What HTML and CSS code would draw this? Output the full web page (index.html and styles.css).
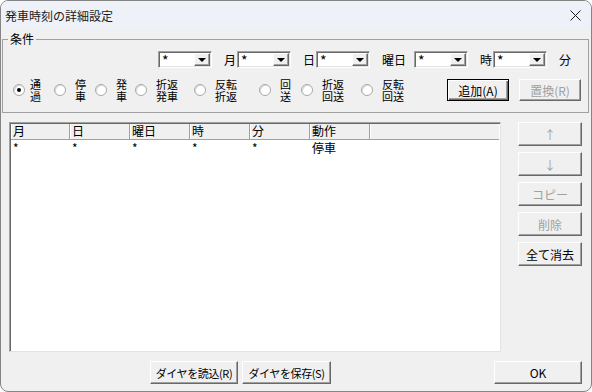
FILE: index.html
```html
<!DOCTYPE html>
<html lang="ja">
<head>
    <meta charset="UTF-8">
    <title>発車時刻の詳細設定</title>
    <link rel="stylesheet" href="styles.css">
</head>
<body>

<div class="window">
    <div class="titlebar">
        <span class="title">発車時刻の詳細設定</span>
        <svg class="close" width="11" height="11" viewBox="0 0 11 11">
            <path d="M0.5 0.5L10.5 10.5M10.5 0.5L0.5 10.5" stroke="#1a1a1a" stroke-width="1"/>
        </svg>
    </div>

    <div class="dialog">
        <!-- Conditions group -->
        <fieldset class="group">
            <legend>条件</legend>
            <div class="cond-row">
                <div class="combo"><span class="combo-text">*</span><span class="drop"></span></div>
                <span class="lbl">月</span>
                <div class="combo"><span class="combo-text">*</span><span class="drop"></span></div>
                <span class="lbl">日</span>
                <div class="combo"><span class="combo-text">*</span><span class="drop"></span></div>
                <span class="lbl wide">曜日</span>
                <div class="combo"><span class="combo-text">*</span><span class="drop"></span></div>
                <span class="lbl">時</span>
                <div class="combo"><span class="combo-text">*</span><span class="drop"></span></div>
                <span class="lbl">分</span>
            </div>
            <div class="action-row">
                <label class="opt first"><span class="radio checked"></span><span class="opt-text">通<br>過</span></label>
                <label class="opt"><span class="radio"></span><span class="opt-text">停<br>車</span></label>
                <label class="opt"><span class="radio"></span><span class="opt-text">発<br>車</span></label>
                <label class="opt"><span class="radio"></span><span class="opt-text">折返<br>発車</span></label>
                <label class="opt"><span class="radio"></span><span class="opt-text">反転<br>折返</span></label>
                <label class="opt"><span class="radio"></span><span class="opt-text">回<br>送</span></label>
                <label class="opt"><span class="radio"></span><span class="opt-text">折返<br>回送</span></label>
                <label class="opt"><span class="radio"></span><span class="opt-text">反転<br>回送</span></label>
                <div class="actions">
                    <button class="btn default">追加(A)</button>
                    <button class="btn" disabled>置換(R)</button>
                </div>
            </div>
        </fieldset>

        <!-- List + side buttons -->
        <div class="main">
            <div class="listview">
                <div class="lv-head">
                    <div class="col">月</div>
                    <div class="col">日</div>
                    <div class="col">曜日</div>
                    <div class="col">時</div>
                    <div class="col">分</div>
                    <div class="col">動作</div>
                    <div class="col rest"></div>
                </div>
                <div class="lv-row">
                    <div class="cell">*</div>
                    <div class="cell">*</div>
                    <div class="cell">*</div>
                    <div class="cell">*</div>
                    <div class="cell">*</div>
                    <div class="cell">停車</div>
                </div>
            </div>
            <div class="side">
                <button class="btn" disabled>↑</button>
                <button class="btn" disabled>↓</button>
                <button class="btn" disabled>コピー</button>
                <button class="btn" disabled>削除</button>
                <button class="btn">全て消去</button>
            </div>
        </div>

        <div class="footer">
            <button class="btn load">ダイヤを読込(R)</button>
            <button class="btn save">ダイヤを保存(S)</button>
            <button class="btn ok">OK</button>
        </div>
    </div>
</div>

</body>
</html>
```

FILE: styles.css
```css
/* Basic page */
body {
    margin: 0;
    font-family: "Noto Sans CJK JP", "Liberation Sans", sans-serif;
    font-size: 12px;
    color: #000;
    background: #fff;
}

.window {
    width: 592px;
    height: 392px;
    box-sizing: border-box;
    border: 1px solid #858585;
    border-radius: 8px;
    overflow: hidden;
    background: #f0f0f0;
    display: flex;
    flex-direction: column;
}

/* Title bar */
.titlebar {
    height: 29px;
    flex: none;
    display: flex;
    align-items: center;
    justify-content: space-between;
    padding: 0 10px 0 4px;
    background: #eef2f8;
}

.title {
    font-size: 12px;
    color: #1a1a1a;
}

.dialog {
    flex: 1;
    display: flex;
    flex-direction: column;
}

/* Group box */
.group {
    margin: 1px 2px 0 1px;
    padding: 4px 0 9px 0;
    min-width: 0;
    border: 1px solid #a0a0a0;
}

.group legend {
    margin-left: 5px;
    padding: 0 2px;
    line-height: 16px;
}

.cond-row {
    display: flex;
    align-items: center;
    padding-left: 155px;
    height: 17px;
}

.lbl {
    margin: 0 1px 0 12px;
}

.lbl.wide {
    margin-right: 8px;
}

.combo {
    width: 54px;
    height: 17px;
    box-sizing: border-box;
    display: flex;
    padding: 1px;
    background: #fff;
    border: 1px solid;
    border-color: #a0a0a0 #fff #fff #a0a0a0;
    box-shadow: inset 1px 1px #696969, inset -1px -1px #e3e3e3;
}

.combo-text {
    flex: 1;
    padding-left: 2px;
    font-size: 14px;
    line-height: 15px;
}

.drop {
    width: 16px;
    box-sizing: border-box;
    background: #f0f0f0;
    border: 1px solid;
    border-color: #fff #696969 #696969 #fff;
    box-shadow: inset -1px -1px #a0a0a0;
    display: flex;
    align-items: center;
    justify-content: center;
}

.drop::after {
    content: "";
    border-left: 4px solid transparent;
    border-right: 4px solid transparent;
    border-top: 4px solid #000;
}

/* Radio options */
.action-row {
    margin-top: 9px;
    height: 26px;
    display: grid;
    grid-template-columns: 41px 41px 40px 59px 65px 42px 60px 86px auto;
    align-items: center;
    padding-left: 10px;
}

.opt {
    display: flex;
    align-items: center;
    gap: 9px;
}

.opt.first {
    gap: 5px;
}

.radio {
    width: 12px;
    height: 12px;
    box-sizing: border-box;
    border-radius: 50%;
    border: 1px solid #a8a8a8;
    background: #fff;
    box-shadow: inset 1px 1px #dadada;
    display: flex;
    align-items: center;
    justify-content: center;
}

.radio.checked::after {
    content: "";
    width: 4px;
    height: 4px;
    border-radius: 50%;
    background: #000;
}

.opt-text {
    font-size: 11px;
    line-height: 12px;
}

.actions {
    display: flex;
    gap: 10px;
}

/* Classic buttons */
.btn {
    font-family: inherit;
    font-size: 12px;
    color: #000;
    background: #f0f0f0;
    height: 22px;
    padding: 0;
    white-space: nowrap;
    box-sizing: border-box;
    border: 1px solid;
    border-color: #fff #696969 #696969 #fff;
    box-shadow: inset -1px -1px #a0a0a0;
    cursor: pointer;
}

.btn.default {
    border-color: #000;
    box-shadow: inset 1px 1px #fff, inset -1px -1px #696969, inset -2px -2px #a0a0a0;
}

.btn:disabled {
    color: #a0a0a0;
    cursor: default;
}

.actions .btn {
    width: 62px;
}

/* List view */
.main {
    display: flex;
    margin-top: 9px;
    padding-left: 8px;
}

.listview {
    width: 492px;
    height: 230px;
    box-sizing: border-box;
    padding: 1px;
    background: #fff;
    border: 1px solid;
    border-color: #a0a0a0 #e3e3e3 #e3e3e3 #a0a0a0;
    box-shadow: inset 1px 1px #696969;
}

.lv-head {
    display: flex;
    height: 15px;
    background: #f0f0f0;
    border-bottom: 1px solid #a0a0a0;
}

.col,
.cell {
    width: 60px;
    box-sizing: border-box;
    padding-left: 2px;
    line-height: 14px;
    flex: none;
}

.cell {
    line-height: 16px;
}

.col {
    border-right: 1px solid #a0a0a0;
    box-shadow: inset 1px 0 #fff;
}

.col:first-child,
.cell:first-child {
    width: 59px;
}

.col.rest {
    flex: 1;
    border-right: none;
}

.lv-row {
    display: flex;
    height: 16px;
}

.side {
    margin-left: 17px;
    width: 64px;
    display: flex;
    flex-direction: column;
    gap: 6px;
}

.side .btn {
    height: 24px;
}

/* Footer buttons */
.footer {
    display: flex;
    gap: 4px;
    margin-top: 9px;
    padding: 0 9px 0 149px;
}

.footer .btn {
    height: 23px;
}

.load,
.save {
    font-size: 11px;
    letter-spacing: -0.4px;
}

.load {
    width: 88px;
}

.save {
    width: 89px;
}

.ok {
    width: 88px;
    margin-left: auto;
}
```
